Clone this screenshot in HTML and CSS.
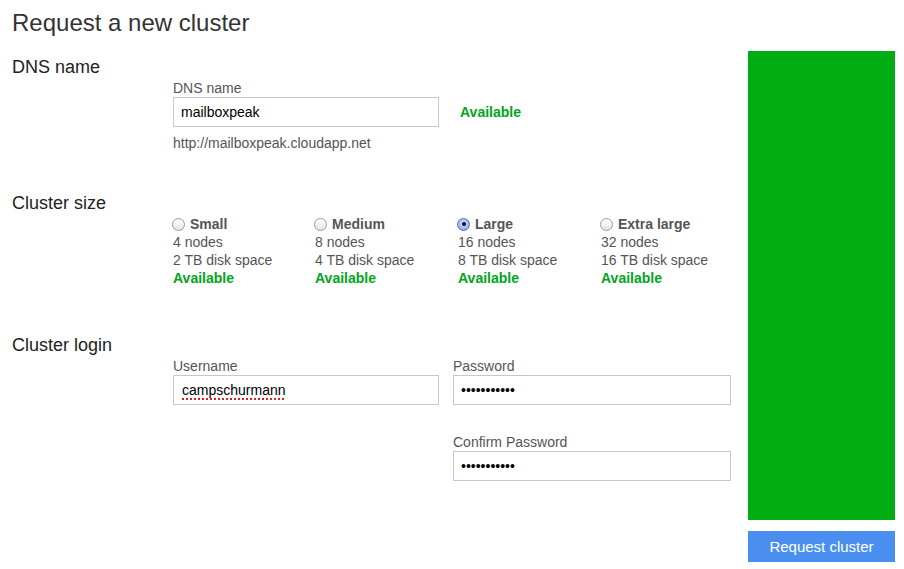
FILE: index.html
```html
<!DOCTYPE html>
<html>
<head>
<meta charset="utf-8">
<title>Request a new cluster</title>
<link rel="stylesheet" href="styles.css">
</head>
<body>
<div class="page">
  <main class="main">
    <h1 class="title">Request a new cluster</h1>

    <section class="section section-dns">
      <h2 class="heading">DNS name</h2>
      <div class="content">
        <label class="label">DNS name</label>
        <div class="dns-row">
          <input class="field field-left" type="text" value="mailboxpeak">
          <span class="status">Available</span>
        </div>
        <div class="url">http://mailboxpeak.cloudapp.net</div>
      </div>
    </section>

    <section class="section section-size">
      <h2 class="heading">Cluster size</h2>
      <div class="content sizes">
        <div class="size">
          <div class="size-name"><span class="radio"></span>Small</div>
          <div>4 nodes</div>
          <div>2 TB disk space</div>
          <div class="status">Available</div>
        </div>
        <div class="size">
          <div class="size-name"><span class="radio"></span>Medium</div>
          <div>8 nodes</div>
          <div>4 TB disk space</div>
          <div class="status">Available</div>
        </div>
        <div class="size">
          <div class="size-name"><span class="radio radio-on"></span>Large</div>
          <div>16 nodes</div>
          <div>8 TB disk space</div>
          <div class="status">Available</div>
        </div>
        <div class="size">
          <div class="size-name"><span class="radio"></span>Extra large</div>
          <div>32 nodes</div>
          <div>16 TB disk space</div>
          <div class="status">Available</div>
        </div>
      </div>
    </section>

    <section class="section section-login">
      <h2 class="heading">Cluster login</h2>
      <div class="content login">
        <div class="group">
          <label class="label">Username</label>
          <div class="field field-left field-text" role="textbox"><span class="spell">campschurmann</span></div>
        </div>
        <div class="group">
          <label class="label">Password</label>
          <input class="field field-right" type="password" value="xxxxxxxxxxx">
        </div>
        <div class="group group-confirm">
          <label class="label">Confirm Password</label>
          <input class="field field-right" type="password" value="xxxxxxxxxxx">
        </div>
      </div>
    </section>
  </main>

  <aside class="aside">
    <div class="panel"></div>
    <button class="button">Request cluster</button>
  </aside>
</div>
</body>
</html>
```

FILE: styles.css
```css
* {
  box-sizing: border-box;
}

html, body {
  margin: 0;
  padding: 0;
  background: #ffffff;
}

body {
  font-family: "Liberation Sans", Arial, Helvetica, sans-serif;
  font-size: 14px;
  color: #555555;
}

.page {
  display: flex;
  width: 904px;
  height: 569px;
}

.main {
  flex: 1;
  padding: 9px 0 0 12px;
}

.title {
  margin: 0;
  font-size: 24px;
  line-height: 28px;
  font-weight: normal;
  color: #333333;
}

.section-dns {
  margin-top: 19px;
}

.section-size {
  margin-top: 40px;
}

.section-login {
  margin-top: 47px;
}

.heading {
  margin: 0;
  font-size: 18px;
  line-height: 22px;
  font-weight: normal;
  color: #222222;
}

.content {
  margin: 1px 0 0 161px;
}

.label {
  display: block;
  line-height: 18px;
  color: #555555;
}

.dns-row {
  display: flex;
  align-items: center;
  gap: 21px;
}

.field {
  display: block;
  height: 30px;
  margin: 0;
  padding: 0 7px;
  border: 1px solid #c8c8c8;
  border-radius: 0;
  font-family: "Liberation Sans", Arial, Helvetica, sans-serif;
  font-size: 14px;
  color: #000000;
  background: #ffffff;
  outline: none;
}

.field-text {
  line-height: 28px;
  padding-left: 8px;
}

.field-left {
  width: 266px;
}

.field-right {
  width: 278px;
}

.spell {
  text-decoration: underline dotted #e02020;
  text-decoration-thickness: 2px;
  text-underline-offset: 3px;
}

.status {
  font-weight: bold;
  color: #00a61a;
  line-height: 18px;
}

.url {
  margin-top: 7px;
  line-height: 18px;
  color: #555555;
}

.sizes {
  display: grid;
  grid-template-columns: 142px 143px 143px 143px;
}

.size {
  line-height: 18px;
  color: #555555;
}

.size-name {
  display: flex;
  align-items: center;
  font-weight: bold;
  color: #555555;
  margin-left: -1px;
}

.radio {
  display: inline-block;
  width: 13px;
  height: 13px;
  margin-right: 5px;
  border: 1px solid #9a9a9a;
  border-radius: 50%;
  background: linear-gradient(#ffffff, #e4e4e4);
  position: relative;
}

.radio-on {
  border-color: #5a6fb8;
  background: radial-gradient(circle at 50% 40%, #d8e6ff 0%, #8cb0f0 70%, #6f93de 100%);
}

.radio-on::after {
  content: "";
  position: absolute;
  left: 3.5px;
  top: 3.5px;
  width: 4px;
  height: 4px;
  border-radius: 50%;
  background: #111111;
}

.login {
  display: grid;
  grid-template-columns: 266px 278px;
  column-gap: 14px;
}

.group-confirm {
  grid-column: 2;
  margin-top: 28px;
}

.aside {
  width: 147px;
  margin-right: 9px;
  display: flex;
  flex-direction: column;
}

.panel {
  margin-top: 51px;
  height: 469px;
  background: #00ae14;
}

.button {
  margin-top: 11px;
  height: 31px;
  border: none;
  border-radius: 0;
  background: #4a8ff0;
  color: #ffffff;
  font-family: "Liberation Sans", Arial, Helvetica, sans-serif;
  font-size: 15px;
  padding: 0;
}
```
